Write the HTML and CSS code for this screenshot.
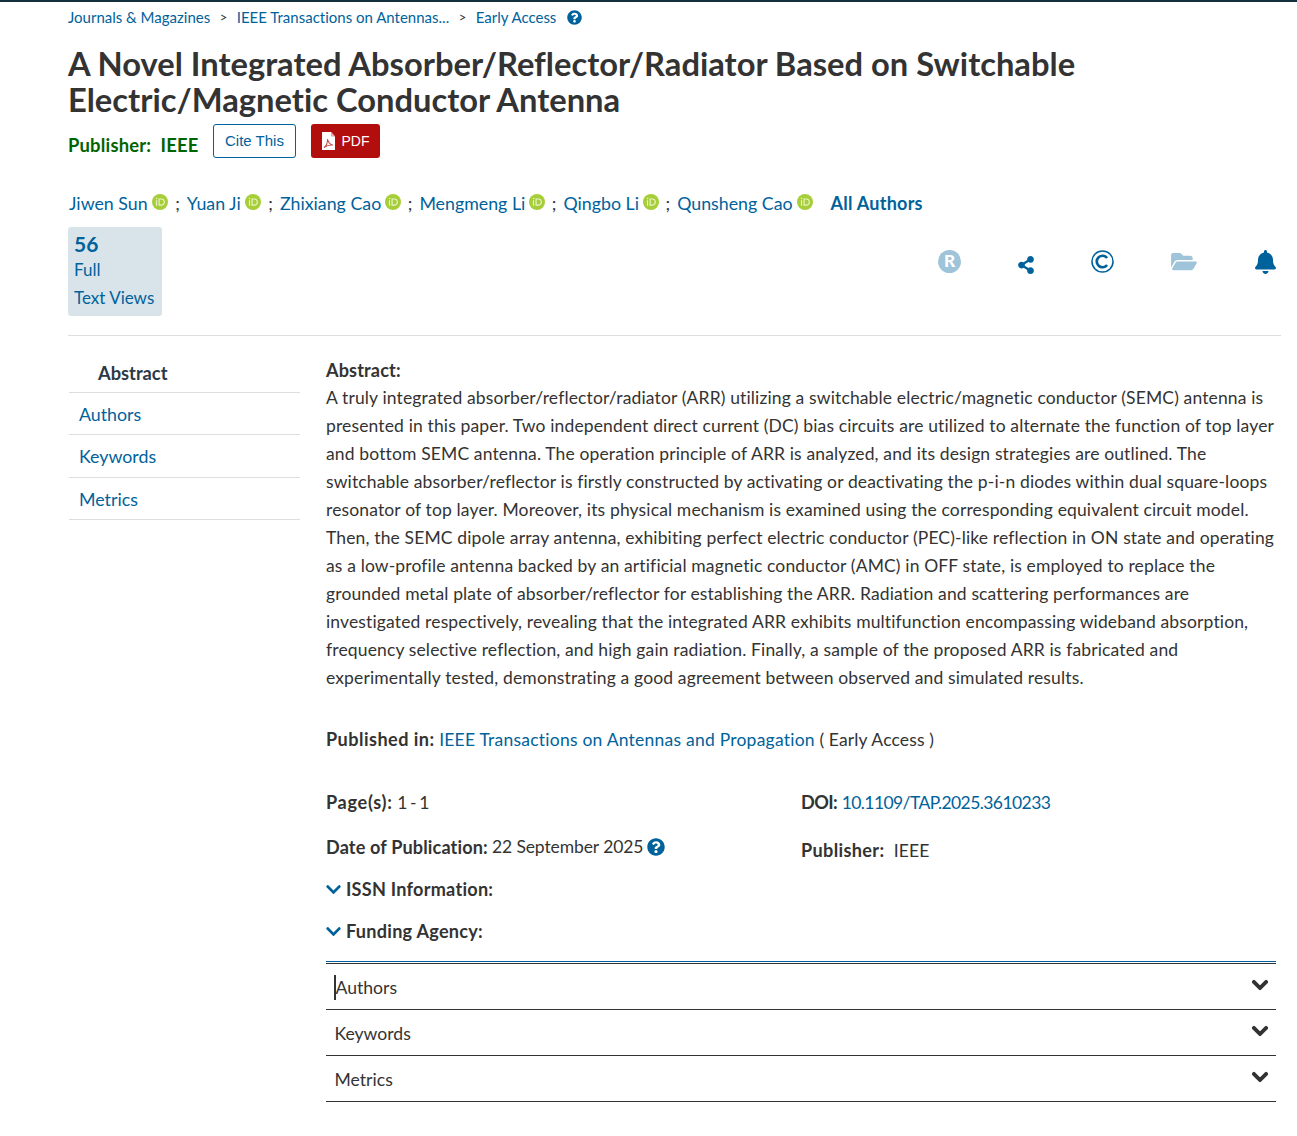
FILE: index.html
```html
<!DOCTYPE html>
<html lang="en">
<head>
<meta charset="utf-8">
<title>A Novel Integrated Absorber/Reflector/Radiator</title>
<link rel="stylesheet" href="styles.css">
</head>
<body>
<svg class="defs" width="0" height="0" aria-hidden="true">
  <symbol id="q" viewBox="0 0 512 512"><path d="M504 256c0 136.997-111.043 248-248 248S8 392.997 8 256C8 119.083 119.043 8 256 8s248 111.083 248 248zM262.655 90c-54.497 0-89.255 22.957-116.549 63.758-3.536 5.286-2.353 12.415 2.715 16.258l34.699 26.31c5.205 3.947 12.621 3.008 16.665-2.122 17.864-22.658 30.113-35.797 57.303-35.797 20.429 0 45.698 13.148 45.698 32.958 0 14.976-12.363 22.667-32.534 33.976C247.128 238.528 216 254.941 216 296v4c0 6.627 5.373 12 12 12h56c6.627 0 12-5.373 12-12v-1.333c0-28.462 83.186-29.647 83.186-106.667 0-58.002-60.165-102-116.531-102zM256 338c-25.365 0-46 20.635-46 46 0 25.364 20.635 46 46 46s46-20.636 46-46c0-25.365-20.635-46-46-46z"/></symbol>
  <symbol id="chev" viewBox="0 0 448 512"><path d="M207.029 381.476L12.686 187.132c-9.373-9.373-9.373-24.569 0-33.941l22.667-22.667c9.357-9.357 24.522-9.375 33.901-.04L224 284.505l154.745-154.021c9.379-9.335 24.544-9.317 33.901.04l22.667 22.667c9.373 9.373 9.373 24.569 0 33.941L240.971 381.476c-9.373 9.372-24.569 9.372-33.942 0z"/></symbol>
  <symbol id="orcid" viewBox="0 0 16 16"><circle cx="8" cy="8" r="8" fill="#a6ce39"/><path fill="#eaf4c8" fill-rule="evenodd" d="M3.900 6.200h1.200v5.500H3.900zM3.800 4.500a.8.8 0 1 1 1.600 0 .8.8 0 1 1-1.600 0zM6.500 4.500h3c2.100 0 3.400 1.500 3.400 3.600s-1.300 3.600-3.400 3.600h-3zM7.700 5.600v5h1.700c1.500 0 2.300-1 2.300-2.500s-.8-2.500-2.300-2.500z"/></symbol>
</svg>
<div class="topbar"></div>
<main class="page">
  <nav class="crumbs">
    <a>Journals &amp; Magazines</a><span class="sep">&gt;</span><a>IEEE Transactions on Antennas...</a><span class="sep">&gt;</span><a>Early Access</a>
    <svg class="q crumb-q"><use href="#q"/></svg>
  </nav>
  <h1>A Novel Integrated Absorber/Reflector/Radiator Based on Switchable<br>Electric/Magnetic Conductor Antenna</h1>
  <div class="pubrow">
    <span class="pub">Publisher:&nbsp; IEEE</span>
    <a class="btn cite">Cite This</a>
    <a class="btn pdf">
      <svg class="pdficon" viewBox="0 0 13 18"><path fill="#fff" d="M0 0h9l4 4.500V18H0z"/><path fill="#e6a9a9" d="M9 0l4 4.500H9z"/><path fill="none" stroke="#c8504f" stroke-width="1.100" d="M2 15.500c2.500-1.500 3.500-5 3.600-8.500.6 3.500 2.500 5.500 5.400 6-3.500-.3-6.500.7-9 2.500z"/></svg>PDF
    </a>
  </div>
  <div class="authors">
    <a>Jiwen Sun</a><svg class="orcid"><use href="#orcid"/></svg><span class="semi wide">;</span>
    <a>Yuan Ji</a><svg class="orcid"><use href="#orcid"/></svg><span class="semi wide">;</span>
    <a>Zhixiang Cao</a><svg class="orcid"><use href="#orcid"/></svg><span class="semi">;</span>
    <a>Mengmeng Li</a><svg class="orcid"><use href="#orcid"/></svg><span class="semi">;</span>
    <a>Qingbo Li</a><svg class="orcid"><use href="#orcid"/></svg><span class="semi">;</span>
    <a>Qunsheng Cao</a><svg class="orcid"><use href="#orcid"/></svg>
    <a class="all">All Authors</a>
  </div>
  <div class="statrow">
    <div class="stat"><b>56</b><span>Full</span><span>Text Views</span></div>
    <div class="tools">
      <svg class="tool" viewBox="0 0 24 24"><circle cx="12" cy="12" r="12" fill="#9fc4d9"/><text x="12" y="18" text-anchor="middle" class="rtext">R</text></svg>
      <svg class="tool share" viewBox="0 0 448 512"><path fill="#00629b" d="M352 320c-22.608 0-43.387 7.819-59.79 20.895l-102.486-64.054a96.551 96.551 0 0 0 0-41.683l102.486-64.054C308.613 184.181 329.392 192 352 192c53.019 0 96-42.981 96-96S405.019 0 352 0s-96 42.981-96 96c0 7.158.79 14.13 2.276 20.841L155.790 180.895C139.387 167.819 118.608 160 96 160c-53.019 0-96 42.981-96 96s42.981 96 96 96c22.608 0 43.387-7.819 59.790-20.895l102.486 64.054A96.301 96.301 0 0 0 256 416c0 53.019 42.981 96 96 96s96-42.981 96-96-42.981-96-96-96z"/></svg>
      <svg class="tool" viewBox="0 0 24 24"><circle cx="12" cy="12" r="11" fill="none" stroke="#00629b" stroke-width="1.600"/><path fill="none" stroke="#00629b" stroke-width="2.800" d="M16.800 8.400a6 6 0 1 0 0 7.200"/></svg>
      <svg class="tool folder" viewBox="0 0 576 512"><path fill="#9fc4d9" d="M572.694 292.093L500.270 416.248A63.997 63.997 0 0 1 444.989 448H45.025c-18.523 0-30.064-20.093-20.731-36.093l72.424-124.155A64 64 0 0 1 152 256h399.964c18.523 0 30.064 20.093 20.730 36.093zM152 224h328v-48c0-26.510-21.490-48-48-48H272l-64-64H48C21.490 64 0 85.490 0 112v278.046l69.077-118.418C86.214 242.250 117.989 224 152 224z"/></svg>
      <svg class="tool bell" viewBox="0 0 448 512"><path fill="#00629b" d="M224 512c35.320 0 63.970-28.650 63.970-64H160.030c0 35.350 28.650 64 63.970 64zm215.390-149.710c-19.320-20.760-55.470-51.990-55.470-154.290 0-77.700-54.480-139.900-127.940-155.160V32c0-17.670-14.320-32-31.980-32s-31.980 14.330-31.980 32v20.840C118.560 68.100 64.080 130.300 64.080 208c0 102.300-36.150 133.530-55.470 154.290-6 6.450-8.660 14.160-8.610 21.710.11 16.400 12.980 32 32.100 32h383.800c19.120 0 32-15.600 32.100-32 .05-7.550-2.610-15.270-8.610-21.710z"/></svg>
    </div>
  </div>
  <hr class="rule">
  <div class="columns">
    <aside class="side">
      <div class="side-item active">Abstract</div>
      <a class="side-item">Authors</a>
      <a class="side-item">Keywords</a>
      <a class="side-item">Metrics</a>
    </aside>
    <article class="content">
      <p class="abs-head"><b>Abstract:</b></p>
      <p class="abstract">A truly integrated absorber/reflector/radiator (ARR) utilizing a switchable electric/magnetic conductor (SEMC) antenna is<br>presented in this paper. Two independent direct current (DC) bias circuits are utilized to alternate the function of top layer<br>and bottom SEMC antenna. The operation principle of ARR is analyzed, and its design strategies are outlined. The<br>switchable absorber/reflector is firstly constructed by activating or deactivating the p-i-n diodes within dual square-loops<br>resonator of top layer. Moreover, its physical mechanism is examined using the corresponding equivalent circuit model.<br>Then, the SEMC dipole array antenna, exhibiting perfect electric conductor (PEC)-like reflection in ON state and operating<br>as a low-profile antenna backed by an artificial magnetic conductor (AMC) in OFF state, is employed to replace the<br>grounded metal plate of absorber/reflector for establishing the ARR. Radiation and scattering performances are<br>investigated respectively, revealing that the integrated ARR exhibits multifunction encompassing wideband absorption,<br>frequency selective reflection, and high gain radiation. Finally, a sample of the proposed ARR is fabricated and<br>experimentally tested, demonstrating a good agreement between observed and simulated results.</p>
      <p class="published"><b>Published in:</b> <a>IEEE Transactions on Antennas and Propagation</a> ( Early Access )</p>
      <div class="meta">
        <div class="meta-col">
          <p class="m-pages"><b>Page(s):</b> <span class="tight">1 - 1</span></p>
          <p class="m-date"><b>Date of Publication:</b> <span class="date">22 September 2025</span> <svg class="q date-q"><use href="#q"/></svg></p>
          <p class="m-exp"><svg class="chev blue"><use href="#chev"/></svg><b>ISSN Information:</b></p>
          <p class="m-exp"><svg class="chev blue"><use href="#chev"/></svg><b>Funding Agency:</b></p>
        </div>
        <div class="meta-col">
          <p class="m-doi"><b>DOI:</b> <a class="doi">10.1109/TAP.2025.3610233</a></p>
          <p class="m-pub"><b>Publisher:</b>&nbsp; IEEE</p>
        </div>
      </div>
      <div class="accordion">
        <div class="acc-row"><span class="caret">Authors</span><svg class="chev dark"><use href="#chev"/></svg></div>
        <div class="acc-row"><span>Keywords</span><svg class="chev dark"><use href="#chev"/></svg></div>
        <div class="acc-row"><span>Metrics</span><svg class="chev dark"><use href="#chev"/></svg></div>
      </div>
    </article>
  </div>
</main>
</body>
</html>
```
FILE: styles.css
```css
* { box-sizing: border-box; }
html, body { margin: 0; padding: 0; }
body { font-family: "Lato", "Noto Sans", sans-serif; color: #333; background: #fff; font-size: 17px; font-variant-ligatures: none; }
a { color: #00629b; text-decoration: none; }
p { margin: 0; }
b { font-weight: 700; }
.defs { position: absolute; }
.topbar { height: 2px; background: #14303f; }
.page { padding: 0 16px 0 68px; }
.crumbs { display: flex; align-items: center; height: 30px; font-size: 15px; }
.sep { margin: 0 9.500px; color: #333; font-size: 13px; }
.q { fill: #00629b; }
.crumb-q { width: 15px; height: 15px; margin-left: 11px; }
h1 { margin: 14px 0 0; font-size: 32.700px; line-height: 36px; font-weight: 700; color: #333; white-space: nowrap; }
.pubrow { display: flex; align-items: flex-start; margin-top: 6px; }
.pub { color: #006400; font-weight: 700; font-size: 18.400px; letter-spacing: .2px; margin-top: 10px; width: 145px; white-space: nowrap; }
.btn { display: flex; align-items: center; justify-content: center; height: 34px; border-radius: 3px; font-family: "Liberation Sans", sans-serif; font-size: 14px; padding-bottom: 2px; }
.cite { width: 83px; border: 1px solid #00629b; color: #00629b; font-size: 15px; }
.pdf { width: 69px; margin-left: 15px; background: #b30e0e; color: #fff; padding-bottom: 0; }
.pdficon { width: 13px; height: 18px; margin-right: 7px; }
.authors { display: flex; align-items: center; margin-top: 33px; padding-left: 1px; height: 24px; font-size: 17.800px; white-space: nowrap; }
.orcid { width: 16px; height: 16px; margin: -2px 0 0 4px; flex: none; }
.semi { margin: 0 7px 0 6.500px; }
.semi.wide { margin-left: 7.500px; }
.all { font-weight: 700; margin-left: 18px; font-size: 18px; letter-spacing: .25px; }
.statrow { display: flex; justify-content: space-between; margin-top: 12px; }
.stat { display: flex; flex-direction: column; width: 94px; height: 89px; padding: 4px 6px; background: #d9e4ea; border-radius: 3px; color: #00629b; font-size: 17px; line-height: 28px; }
.stat b { font-size: 21px; line-height: 25px; }
.tools { display: flex; align-items: flex-start; gap: 57px; padding: 23px 5px 0 0; }
.tool { width: 23px; height: 23px; display: block; flex: none; }
.rtext { font-family: "Lato", sans-serif; font-size: 18px; font-weight: 900; fill: #fff; }
.share { width: 16px; height: 18px; margin-top: 6px; }
.folder { width: 26px; height: 23px; }
.bell { width: 21px; height: 24px; margin-left: 1px; }
.rule { border: 0; border-top: 1px solid #ddd; margin: 19px 0 0; }
.columns { display: flex; margin-top: 16px; }
.side { width: 232px; flex: none; padding-left: 1px; }
.side-item { display: block; height: 42.300px; line-height: 43px; border-bottom: 1px solid #ddd; padding-left: 10px; font-size: 17.800px; }
.side-item.active { padding-left: 29px; font-weight: 700; font-size: 18.300px; color: #2b3a46; height: 41px; line-height: 42px; }
.content { margin-left: 26px; width: 950px; flex: none; font-size: 17.500px; letter-spacing: .14px; }
.content b { font-size: 18.100px; }
.abs-head { margin-top: 6px; line-height: 25.500px; }
.abstract { line-height: 28px; white-space: nowrap; }
.published { margin-top: 33.500px; line-height: 28px; }
.published b { letter-spacing: .45px; }
.published a { letter-spacing: .23px; }
.meta { display: grid; grid-template-columns: 475px 475px; margin-top: 34px; }
.meta p { line-height: 28px; }
.m-pages b { letter-spacing: .7px; }
.m-doi b { letter-spacing: -.6px; }
.m-pub b { letter-spacing: .35px; }
.m-exp b { letter-spacing: .25px; }
.tight { letter-spacing: -.9px; }
.date { letter-spacing: -.1px; }
.doi { letter-spacing: -.58px; }
.m-date { margin-top: 16px; display: flex; align-items: center; gap: 4px; white-space: nowrap; }
.date-q { width: 18px; height: 18px; }
.m-pub { margin-top: 19px; }
.m-exp { margin-top: 14px; display: flex; align-items: center; }
.chev { width: 15px; height: 17px; flex: none; }
.chev.blue { fill: #00629b; margin-right: 5px; }
.chev.dark { fill: #333; stroke: #333; stroke-width: 30px; width: 16px; height: 18px; margin: -5px 0 0 0; }
.accordion { margin-top: 16px; border-top: 1px solid #00629b; padding-top: 1px; }
.acc-row { display: flex; align-items: center; justify-content: space-between; height: 46px; padding: 1px 8px 0 8.500px; border-bottom: 1px solid #333; font-size: 17.600px; letter-spacing: 0; }
.acc-row:first-child { height: 47px; border-top: 1px solid #333; }
.caret { border-left: 2px solid #333; margin-left: -1px; line-height: 25px; }
```
